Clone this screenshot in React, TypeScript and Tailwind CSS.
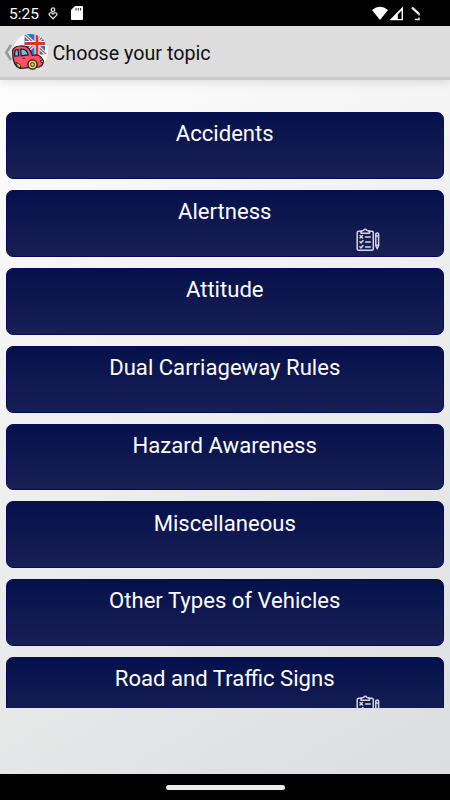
const topics = [
  { title: 'Accidents', hasTest: false },
  { title: 'Alertness', hasTest: true },
  { title: 'Attitude', hasTest: false },
  { title: 'Dual Carriageway Rules', hasTest: false },
  { title: 'Hazard Awareness', hasTest: false },
  { title: 'Miscellaneous', hasTest: false },
  { title: 'Other Types of Vehicles', hasTest: false },
  { title: 'Road and Traffic Signs', hasTest: true }
];

function StatusBar() {
  return (
    <div className="flex h-[26px] shrink-0 items-center bg-black pl-[9px] text-white">
      <span className="w-[39px] pt-[2px] text-[15.5px] leading-[24px]">5:25</span>
      <svg className="h-[13px] w-[10px]" viewBox="0 0 10 13" fill="none" stroke="#ddd" strokeWidth="1.3">
        <circle cx="5" cy="2.7" r="1.8" />
        <path d="M5 11.8 1.6 8.4C.2 6.8 2.3 4.8 3.8 6L5 7.2 6.2 6C7.7 4.8 9.8 6.8 8.4 8.4Z" />
      </svg>
      <svg className="ml-[13px] h-[14px] w-[12px]" viewBox="0 0 12 14">
        <path fill="#fff" d="M4 0h7q1 0 1 1v12q0 1-1 1H1q-1 0-1-1V4Z" />
        <path stroke="#222" strokeWidth="1" d="M5 2v2.5M7.3 2v2.5M9.6 2v2.5" />
      </svg>
      <svg className="ml-[289px] h-[15px] w-[49px]" viewBox="0 0 49 15">
        <path fill="#fff" d="M0 4Q8 -2.5 16 4L8 14Z" />
        <path fill="#fff" fillRule="evenodd" d="M17.5 14.2 31 .6v13.6ZM25.8 13h3.8V4.4l-3.8 4Z" />
        <path fill="none" stroke="#eee" strokeWidth="2.4" d="m40 1.5 6.6 6.2" />
        <path fill="none" stroke="#eee" strokeWidth="1.4" d="M47 7v2.5M43 13.5h4v-2" />
      </svg>
    </div>
  );
}

function CarLogo() {
  return (
    <svg className="mt-px h-9 w-9" viewBox="0 0 36 36">
      <defs>
        <clipPath id="badge">
          <circle cx="18.5" cy="17.5" r="17.5" />
        </clipPath>
      </defs>
      <circle cx="18.5" cy="17.5" r="17.5" fill="#fff" />
      <g clipPath="url(#badge)">
        {/* Union flag */}
        <path fill="#2878c4" d="M12.5 0h20.5v20.5H12.5Z" />
        <path stroke="#fff" strokeWidth="3.2" d="m12 0 22 20M34 0 12 20" />
        <path stroke="#d8403a" strokeWidth="1.2" d="m12 0 22 20M34 0 12 20" />
        <path stroke="#fff" strokeWidth="5" d="M25 0v21M12.5 9.5H33" />
        <path stroke="#d8342e" strokeWidth="2.8" d="M25 0v21M12.5 9.5H33" />
      </g>
      {/* Car */}
      <path
        fill="#fa5264"
        stroke="#1c1822"
        strokeWidth="1.2"
        d="M.7 16.5C1.4 13.3 4.2 12.2 8 12c6-.6 9.5 1 12.3 9.3 5-1.1 9.7.7 10.8 5.3.3 2.6-1.1 5.3-3.6 6.2L8 34.4C2.6 32.5.3 27.5.7 16.5Z"
      />
      <path fill="#62c3e6" stroke="#1c1822" strokeWidth="1.2" d="M3.3 16.2Q2.4 18.6 2.7 22l3.9-.2-.6-6.3Q4.5 15.4 3.3 16.2ZM8.6 15.3l.5 6.5 7.1-.9Q14.8 14.5 8.6 15.3Z" />
      <path stroke="#1c1822" strokeWidth=".8" d="M10.5 24.5l2.5-.3" />
      <circle cx="20.5" cy="30.5" r="4.6" fill="#f5cb45" stroke="#1c1822" strokeWidth="1.3" />
      <circle cx="20.5" cy="30.5" r="1.9" fill="#c5d0d5" stroke="#1c1822" strokeWidth=".9" />
      <path fill="#f5cb45" stroke="#1c1822" strokeWidth=".9" d="M28.7 26.3l2.6-.3.4 2.1-2.6.5ZM3.7 28.5q.8 4.3 4.5 5.6l.5-2.7Q6 28.8 3.7 28.5Z" />
    </svg>
  );
}

function TestIcon() {
  return (
    <svg className="h-6 w-6" viewBox="0 0 24 24" fill="none" stroke="#d5d6e5" strokeWidth="1.5" strokeLinecap="round" strokeLinejoin="round">
      <path d="M5.5 3.2H2.7Q1.2 3.2 1.2 4.7v16.1q0 1.5 1.5 1.5h13.1q1.5 0 1.5-1.5V4.7q0-1.5-1.5-1.5H13" />
      <path d="M5 5.2V3.3L7.6 2.4Q9.2.1 10.9 2.4l2.6.9v1.9Z" />
      <path d="m4 7.5 2.5 2.5M6.5 7.5 4 10M9.5 9h4.8M3.9 13.8l1.1 1.1 2-2.4M9.5 14h4.8M3.9 18.8 5 19.9l2-2.4M9.5 19h4.8" />
      <path d="M19.8 6.1q0-1.2 1.4-1.2t1.4 1.2v11.6l-1.4 3-1.4-3ZM19.8 8h2.8M19.8 17.2h2.8" />
    </svg>
  );
}

function TopicCard({ title, hasTest }: { title: string; hasTest: boolean }) {
  return (
    <button className="flex h-[66.9px] w-full shrink-0 flex-col items-center rounded-[7px] border border-[#08095a] bg-linear-to-b from-[#06104b] to-[#181f54] pt-[5.1px] text-white">
      <span className="text-[22.1px] leading-[30px]">{title}</span>
      {hasTest && (
        <span className="mt-[2px] mr-[63.5px] self-end">
          <TestIcon />
        </span>
      )}
    </button>
  );
}

export default function App() {
  return (
    <div className="flex h-[800px] w-[450px] flex-col overflow-hidden bg-black font-['Roboto',sans-serif]">
      <StatusBar />
      <div className="flex min-h-0 flex-1 flex-col bg-linear-[150deg] from-white to-[#dcddde]">
        <header className="z-10 flex h-[54px] shrink-0 items-center border-b-[3px] border-[#cbcbcb] bg-[#dddddd] pl-[4px] shadow-[0_2px_9px_rgba(0,0,0,0.12)]">
          <svg className="mt-px h-[17px] w-[8px]" viewBox="0 0 8 17" fill="none" stroke="#999" strokeWidth="2.6">
            <path d="M7 1 2.3 8.5 7 16" />
          </svg>
          <CarLogo />
          <h1 className="ml-[4.5px] pt-[4px] text-[19.7px] leading-7 text-[#111]">Choose your topic</h1>
        </header>
        <main className="mt-[32px] flex h-[596px] shrink-0 flex-col gap-[11px] overflow-hidden pr-[6px] pl-[5.5px]">
          {topics.map((topic) => (
            <TopicCard key={topic.title} {...topic} />
          ))}
        </main>
      </div>
      {/* Gesture bar */}
      <div className="flex h-[26px] shrink-0 items-center justify-center bg-black">
        <div className="h-[5px] w-[119px] rounded-full bg-[#ececec]" />
      </div>
    </div>
  );
}
